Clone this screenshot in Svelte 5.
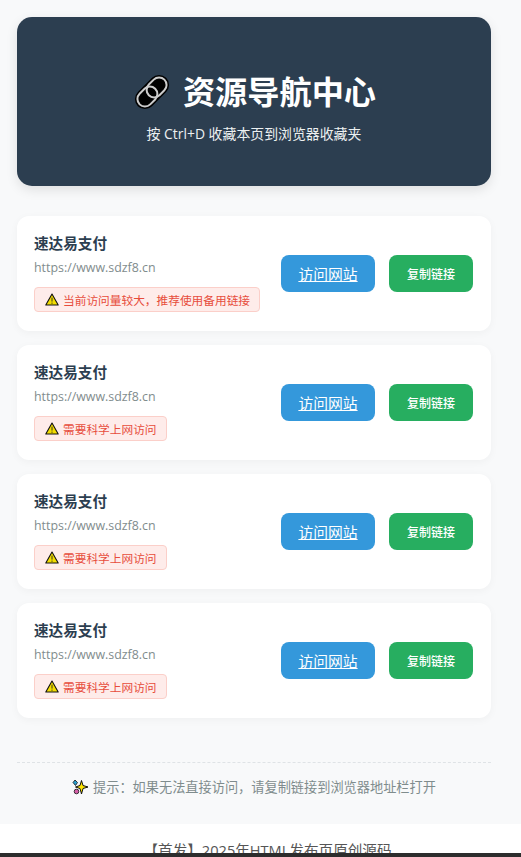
<script>
	const links = [
		{ name: '速达易支付', url: 'https://www.sdzf8.cn', note: '当前访问量较大，推荐使用备用链接' },
		{ name: '速达易支付', url: 'https://www.sdzf8.cn', note: '需要科学上网访问' },
		{ name: '速达易支付', url: 'https://www.sdzf8.cn', note: '需要科学上网访问' },
		{ name: '速达易支付', url: 'https://www.sdzf8.cn', note: '需要科学上网访问' }
	];
</script>

<div class="page">
	<header class="hero">
		<h1>
			<svg class="link-icon" viewBox="0 0 36 36" width="36" height="36" aria-hidden="true">
				<g transform="rotate(-45 18 18)" fill="none">
					<rect x="-2" y="8" width="40" height="20" rx="10" fill="#000" />
					<rect x="0.5" y="10.5" width="22" height="15" rx="7.5" stroke="#ccc" stroke-width="2" />
					<rect x="13.5" y="10.5" width="22" height="15" rx="7.5" stroke="#ccc" stroke-width="2" />
				</g>
			</svg>
			<span>资源导航中心</span>
		</h1>
		<p>按 Ctrl+D 收藏本页到浏览器收藏夹</p>
	</header>

	<main class="list">
		{#each links as link}
			<section class="card">
				<div class="info">
					<h2>{link.name}</h2>
					<div class="url">{link.url}</div>
					<div class="note">
						<svg viewBox="0 0 14 13" width="14" height="13" aria-hidden="true">
							<path d="M7 1L13.2 12H.8Z" fill="#f2dc00" stroke="#111" stroke-width="1.1" stroke-linejoin="round" />
							<path d="M7 4.6V8.6M7 9.6V10.8" stroke="#222" stroke-width=".9" />
						</svg>
						<span>{link.note}</span>
					</div>
				</div>
				<div class="actions">
					<a class="btn visit" href={link.url}>访问网站</a>
					<button class="btn copy" type="button">复制链接</button>
				</div>
			</section>
		{/each}
	</main>

	<footer class="hint">
		<svg viewBox="0 0 16 16" width="16" height="16" aria-hidden="true">
			<path d="M9.5 1.5L11 6.5L16 8L11 9.5L9.5 15L8 9.5L3.5 8L8 6.5Z" fill="#ffe600" stroke="#111" stroke-width="1" stroke-linejoin="round" />
			<path d="M3 1L5.5 3.5L3.5 6.5L1 3.5Z" fill="#2a9fd0" stroke="#111" stroke-width=".8" />
			<circle cx="4.5" cy="12.5" r="2.3" fill="#d65fa8" stroke="#111" stroke-width=".8" />
		</svg>
		<span>提示：如果无法直接访问，请复制链接到浏览器地址栏打开</span>
	</footer>
</div>

<div class="extra">【首发】2025年HTML发布页原创源码</div>
<div class="bottom-bar"></div>

<style>
	:global(body) {
		margin: 0;
		background: #fff;
		font-family: 'Open Sans', 'Noto Sans CJK SC', sans-serif;
		overflow: hidden;
	}

	.page {
		height: 824px;
		box-sizing: border-box;
		padding: 17px 30px 0 17px;
		background: #f8f9fa;
	}

	.hero {
		height: 169px;
		box-sizing: border-box;
		padding-top: 10px;
		display: flex;
		flex-direction: column;
		align-items: center;
		justify-content: center;
		background: #2c3e50;
		color: #fff;
		border-radius: 15px;
		box-shadow: 0 4px 12px rgba(0, 0, 0, 0.1);
	}

	.hero h1 {
		display: flex;
		align-items: center;
		gap: 13px;
		margin: 0 0 9px;
		padding-left: 2px;
		font-size: 32.2px;
		line-height: 46px;
		font-weight: 700;
	}

	.hero p {
		margin: 0;
		font-size: 13.9px;
		line-height: 20px;
		color: #ecf0f1;
	}

	.link-icon {
		display: block;
	}

	.list {
		display: flex;
		flex-direction: column;
		gap: 14px;
		margin-top: 30px;
	}

	.card {
		height: 115px;
		box-sizing: border-box;
		display: flex;
		align-items: center;
		justify-content: space-between;
		padding: 0 18px 0 17px;
		background: #fff;
		border-radius: 12px;
		box-shadow: 0 2px 8px rgba(0, 0, 0, 0.04);
	}

	.info {
		min-width: 0;
		padding-bottom: 3px;
	}

	h2 {
		margin: 0;
		font-size: 14.6px;
		line-height: 22px;
		font-weight: 700;
		color: #2c3e50;
	}

	.url {
		margin-top: 4px;
		font-size: 12.4px;
		line-height: 20px;
		color: #7f8c8d;
	}

	.note {
		display: inline-flex;
		align-items: center;
		gap: 4px;
		margin-top: 9px;
		height: 25px;
		box-sizing: border-box;
		padding: 0 9px 0 10px;
		font-size: 11.7px;
		color: #e74c3c;
		background: #feecea;
		border: 1px solid #fbcfc9;
		border-radius: 4px;
		white-space: nowrap;
	}

	.actions {
		display: flex;
		gap: 14px;
		flex: none;
	}

	.btn {
		display: flex;
		align-items: center;
		justify-content: center;
		height: 37px;
		box-sizing: border-box;
		border: 0;
		border-radius: 8px;
		color: #fff;
		font-family: inherit;
	}

	.visit {
		width: 94px;
		background: #3498db;
		font-size: 14.8px;
		text-decoration: underline;
	}

	.copy {
		width: 84px;
		background: #27ae60;
		font-size: 12px;
		font-weight: 500;
	}

	.hint {
		display: flex;
		align-items: center;
		justify-content: center;
		gap: 5px;
		margin-top: 44px;
		padding-top: 14px;
		border-top: 1px dashed #dfe3e6;
		font-size: 13.2px;
		line-height: 20px;
		color: #7f8c8d;
	}

	.extra {
		height: 33px;
		padding: 16px 0 0 14px;
		box-sizing: border-box;
		text-align: center;
		font-size: 14.6px;
		line-height: 20px;
		color: #555;
		background: #fff;
		white-space: nowrap;
	}

	.bottom-bar {
		position: fixed;
		left: 0;
		right: 0;
		bottom: 0;
		height: 4px;
		background: #2d2d2d;
	}
</style>
